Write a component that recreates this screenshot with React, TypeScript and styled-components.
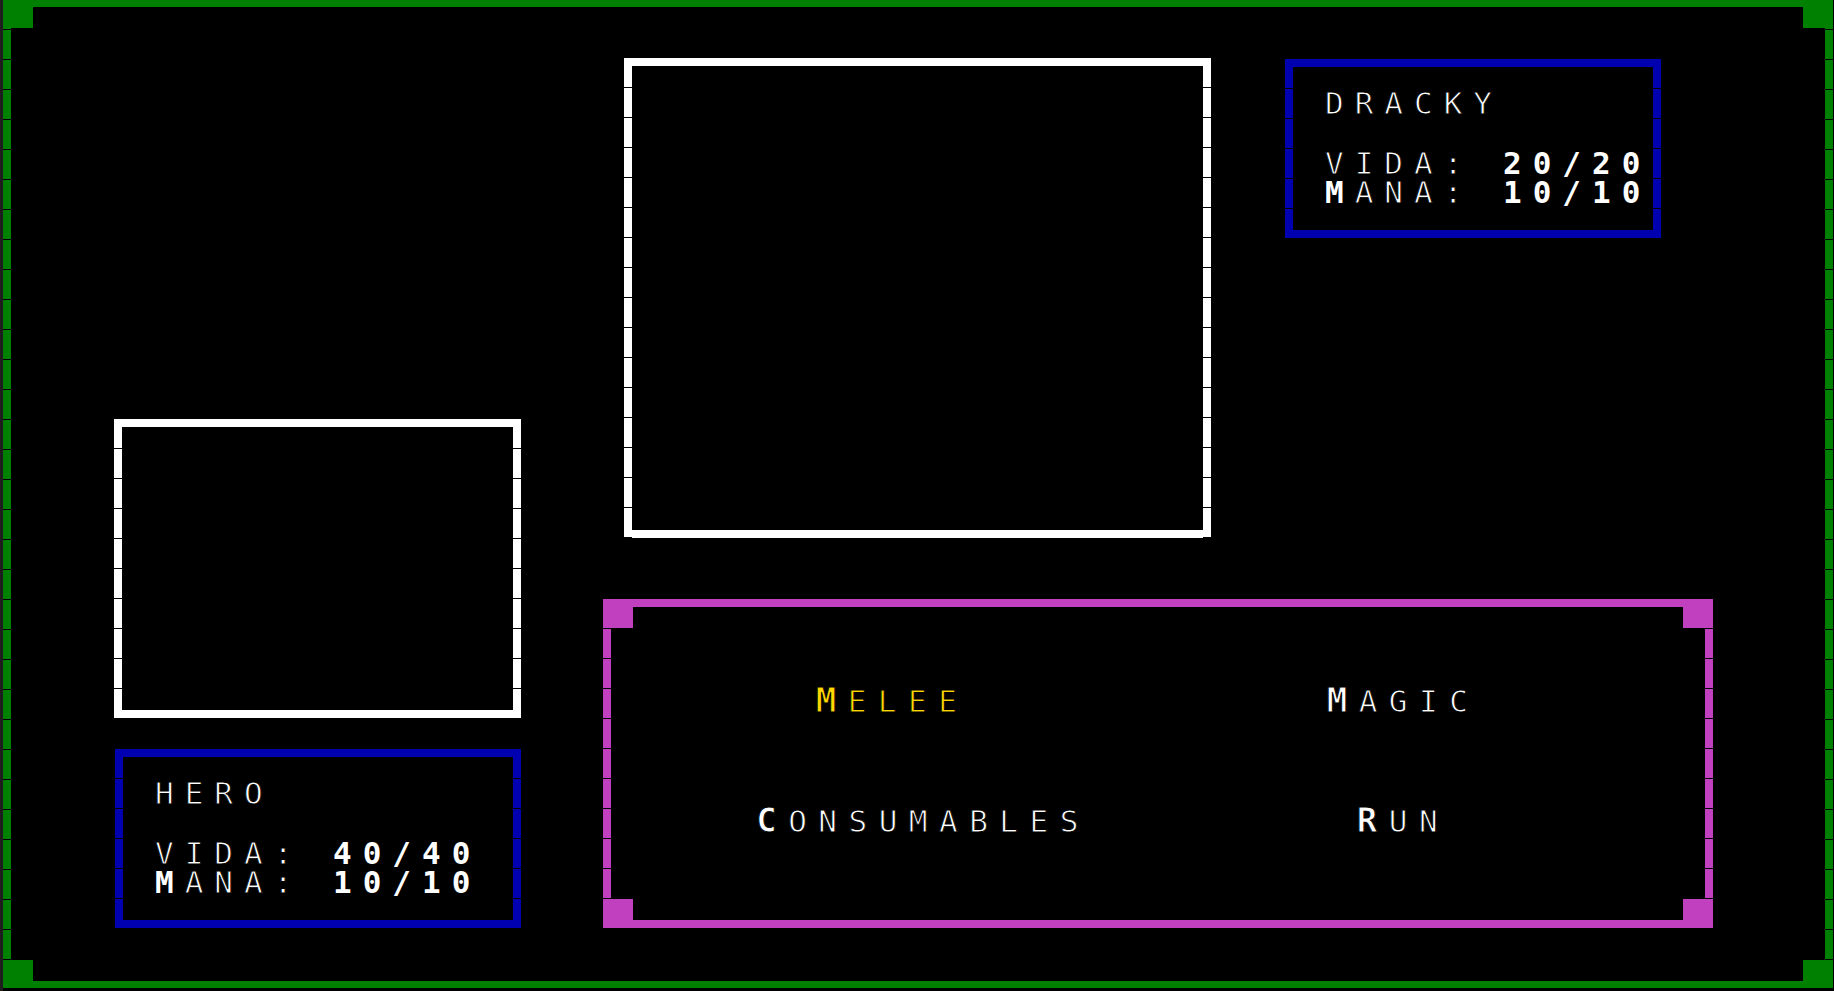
import React from "react";
import styled, { createGlobalStyle, css } from "styled-components";

const GlobalStyle = createGlobalStyle`
  *, *::before, *::after { box-sizing: border-box; }
  html, body { margin: 0; padding: 0; background: #000; }
  body { font-family: "DejaVu Sans Mono", "Liberation Mono", monospace; color: #fff; }
`;

const Page = styled.div`
  width: 1834px;
  height: 991px;
  border-left: 3px solid #1e1e1e;
  background: #000;
  overflow: hidden;
`;

type FrameProps = { $color: string; $bw?: string };

const Frame = styled.div<FrameProps>`
  position: relative;
  border-style: solid;
  border-color: ${(p) => p.$color};
  border-width: ${(p) => p.$bw ?? "8px"};
  &::before {
    content: "";
    position: absolute;
    top: -8px;
    bottom: -8px;
    left: -8px;
    right: -8px;
    pointer-events: none;
    background:
      repeating-linear-gradient(to bottom, transparent 0 29px, #000 29px 30px) left top / 8px 100% no-repeat,
      repeating-linear-gradient(to bottom, transparent 0 29px, #000 29px 30px) right top / 8px 100% no-repeat;
  }
`;

const cornerPos = {
  tl: css`top: -8px; left: -8px;`,
  tr: css`top: -8px; right: -8px;`,
  bl: css`bottom: -8px; left: -8px;`,
  br: css`bottom: -8px; right: -8px;`,
};

const Corner = styled.span<{ $pos: keyof typeof cornerPos; $color: string }>`
  position: absolute;
  width: 30px;
  height: 29px;
  background: ${(p) => p.$color};
  ${(p) => cornerPos[p.$pos]}
`;

const Screen = styled(Frame)`
  width: 1830px;
  height: 988px;
  display: flex;
  align-items: flex-end;
  gap: 82px;
  padding: 51px 0 53px 103px;
  &::before { top: -7px; bottom: -7px; }
  ${Corner} { height: 28px; }
  ${Corner}[data-pos="tl"], ${Corner}[data-pos="tr"] { top: -7px; }
  ${Corner}[data-pos="bl"], ${Corner}[data-pos="br"] { bottom: -7px; }
`;

const LeftColumn = styled.div`
  width: 407px;
  display: flex;
  flex-direction: column;
  gap: 31px;
`;

const RightColumn = styled.div`
  width: 1110px;
  display: flex;
  flex-direction: column;
`;

const TopRow = styled.div`
  display: flex;
  align-items: flex-start;
  gap: 74px;
  padding-left: 21px;
`;

const Portrait = styled(Frame)<{ $w: number; $h: number }>`
  width: ${(p) => p.$w}px;
  height: ${(p) => p.$h}px;
`;

const thin = css`
  -webkit-text-stroke: 0.9px #000;
`;

const StatusBox = styled(Frame)<{ $w: number; $mt?: number; $self?: string }>`
  width: ${(p) => p.$w}px;
  height: 179px;
  margin-top: ${(p) => p.$mt ?? 0}px;
  align-self: ${(p) => p.$self ?? "auto"};
  padding: 22px 0 0 32px;
  font-size: 31px;
  line-height: 29px;
  letter-spacing: 11px;
  white-space: pre;
`;

const Name = styled.div`
  margin-bottom: 31px;
  ${thin}
`;

const StatLine = styled.div``;

const Label = styled.span`
  ${thin}
`;

const Strong = styled.span`
  font-weight: bold;
  -webkit-text-stroke: 0;
`;

const MenuBox = styled(Frame)`
  width: 1110px;
  height: 329px;
  margin-top: 61px;
  display: grid;
  grid-template-columns: 400px 400px;
  grid-auto-rows: 120px;
  column-gap: 80px;
  align-content: center;
  padding-left: 112px;
`;

const MenuItem = styled.div<{ $selected?: boolean }>`
  display: flex;
  align-items: center;
  justify-content: center;
  padding-right: ${(p) => (p.$selected ? 62 : 0)}px;
  padding-bottom: 6px;
  font-size: 31px;
  letter-spacing: 11.5px;
  color: ${(p) => (p.$selected ? "#ffd700" : "#fff")};
`;

const MenuLabel = styled.span`
  display: block;
  line-height: 36px;
  ${thin}
  &::first-letter {
    font-weight: bold;
    font-size: 34px;
    -webkit-text-stroke: 0;
  }
`;

const GREEN = "#008000";
const MAGENTA = "#c040c0";
const BLUE = "#0000b0";
const WHITE = "#ffffff";

function Corners({ color }: { color: string }) {
  return (
    <>
      {(["tl", "tr", "bl", "br"] as const).map((p) => (
        <Corner key={p} $pos={p} data-pos={p} $color={color} />
      ))}
    </>
  );
}

function Status({ name, vida, mana, w, mt, self }: { name: string; vida: string; mana: string; w: number; mt?: number; self?: string }) {
  return (
    <StatusBox $color={BLUE} $w={w} $mt={mt} $self={self}>
      <Name>{name}</Name>
      <StatLine>
        <Label>{"VIDA: "}</Label>
        <Strong>{vida}</Strong>
      </StatLine>
      <StatLine>
        <Strong>M</Strong>
        <Label>{"ANA: "}</Label>
        <Strong>{mana}</Strong>
      </StatLine>
    </StatusBox>
  );
}

export default function App() {
  const items = [
    { label: "MELEE", selected: true },
    { label: "MAGIC" },
    { label: "CONSUMABLES" },
    { label: "RUN" },
  ];
  return (
    <Page>
      <GlobalStyle />
      <Screen $color={GREEN} $bw="7px 8px">
        <Corners color={GREEN} />
        <LeftColumn>
          <Portrait $color={WHITE} $w={407} $h={299} />
          <Status name="HERO" vida="40/40" mana="10/10" w={406} self="flex-end" />
        </LeftColumn>
        <RightColumn>
          <TopRow>
            <Portrait $color={WHITE} $w={587} $h={480} />
            <Status name="DRACKY" vida="20/20" mana="10/10" w={376} mt={1} />
          </TopRow>
          <MenuBox $color={MAGENTA}>
            <Corners color={MAGENTA} />
            {items.map((it) => (
              <MenuItem key={it.label} $selected={it.selected}>
                <MenuLabel>{it.label}</MenuLabel>
              </MenuItem>
            ))}
          </MenuBox>
        </RightColumn>
      </Screen>
    </Page>
  );
}
